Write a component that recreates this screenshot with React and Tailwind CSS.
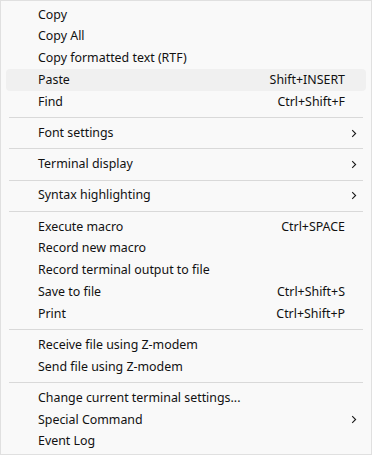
import React from "react";

const Chevron = () => (
  <svg width="6" height="9" viewBox="0 0 6 9" className="block">
    <path d="M1.2 1.2 L4.6 4.5 L1.2 7.8" fill="none" stroke="#1a1a1a" strokeWidth="1.1" />
  </svg>
);

const groups = [
  [
    ["Copy"],
    ["Copy All"],
    ["Copy formatted text (RTF)"],
    ["Paste", "Shift+INSERT", false, true],
    ["Find", "Ctrl+Shift+F"],
  ],
  [["Font settings", null, true]],
  [["Terminal display", null, true]],
  [["Syntax highlighting", null, true]],
  [
    ["Execute macro", "Ctrl+SPACE"],
    ["Record new macro"],
    ["Record terminal output to file"],
    ["Save to file", "Ctrl+Shift+S"],
    ["Print", "Ctrl+Shift+P"],
  ],
  [["Receive file using Z-modem"], ["Send file using Z-modem"]],
  [["Change current terminal settings..."], ["Special Command", null, true], ["Event Log"]],
];

function Row({ label, shortcut, sub, hover }) {
  return (
    <div
      className={
        "mx-[5px] h-[21.75px] flex items-center pl-[32px] pr-[9px] rounded-[4px] " +
        (hover ? "bg-[#f0f0f0]" : "")
      }
    >
      <span className="flex-1 whitespace-nowrap">{label}</span>
      {shortcut && <span className="whitespace-nowrap">{shortcut}</span>}
      <span className="w-[12px] flex justify-end">{sub && <Chevron />}</span>
    </div>
  );
}

export default function App() {
  return (
    <div
      className="w-[372px] h-[455px] bg-[#f9f9f9] border border-[#e0e0e0] pt-[3px] text-[12.4px] text-[#111111]"
      style={{ fontFamily: '"Noto Sans", "Open Sans", sans-serif' }}
    >
      {groups.map((g, gi) => (
        <div key={gi}>
          {gi > 0 && (
            <div className="h-[9.5px] flex items-center px-[8px]">
              <div className="h-px w-full bg-[#d9d9d9]" />
            </div>
          )}
          {g.map((it, i) => (
            <Row key={i} label={it[0]} shortcut={it[1]} sub={it[2]} hover={it[3]} />
          ))}
        </div>
      ))}
    </div>
  );
}
